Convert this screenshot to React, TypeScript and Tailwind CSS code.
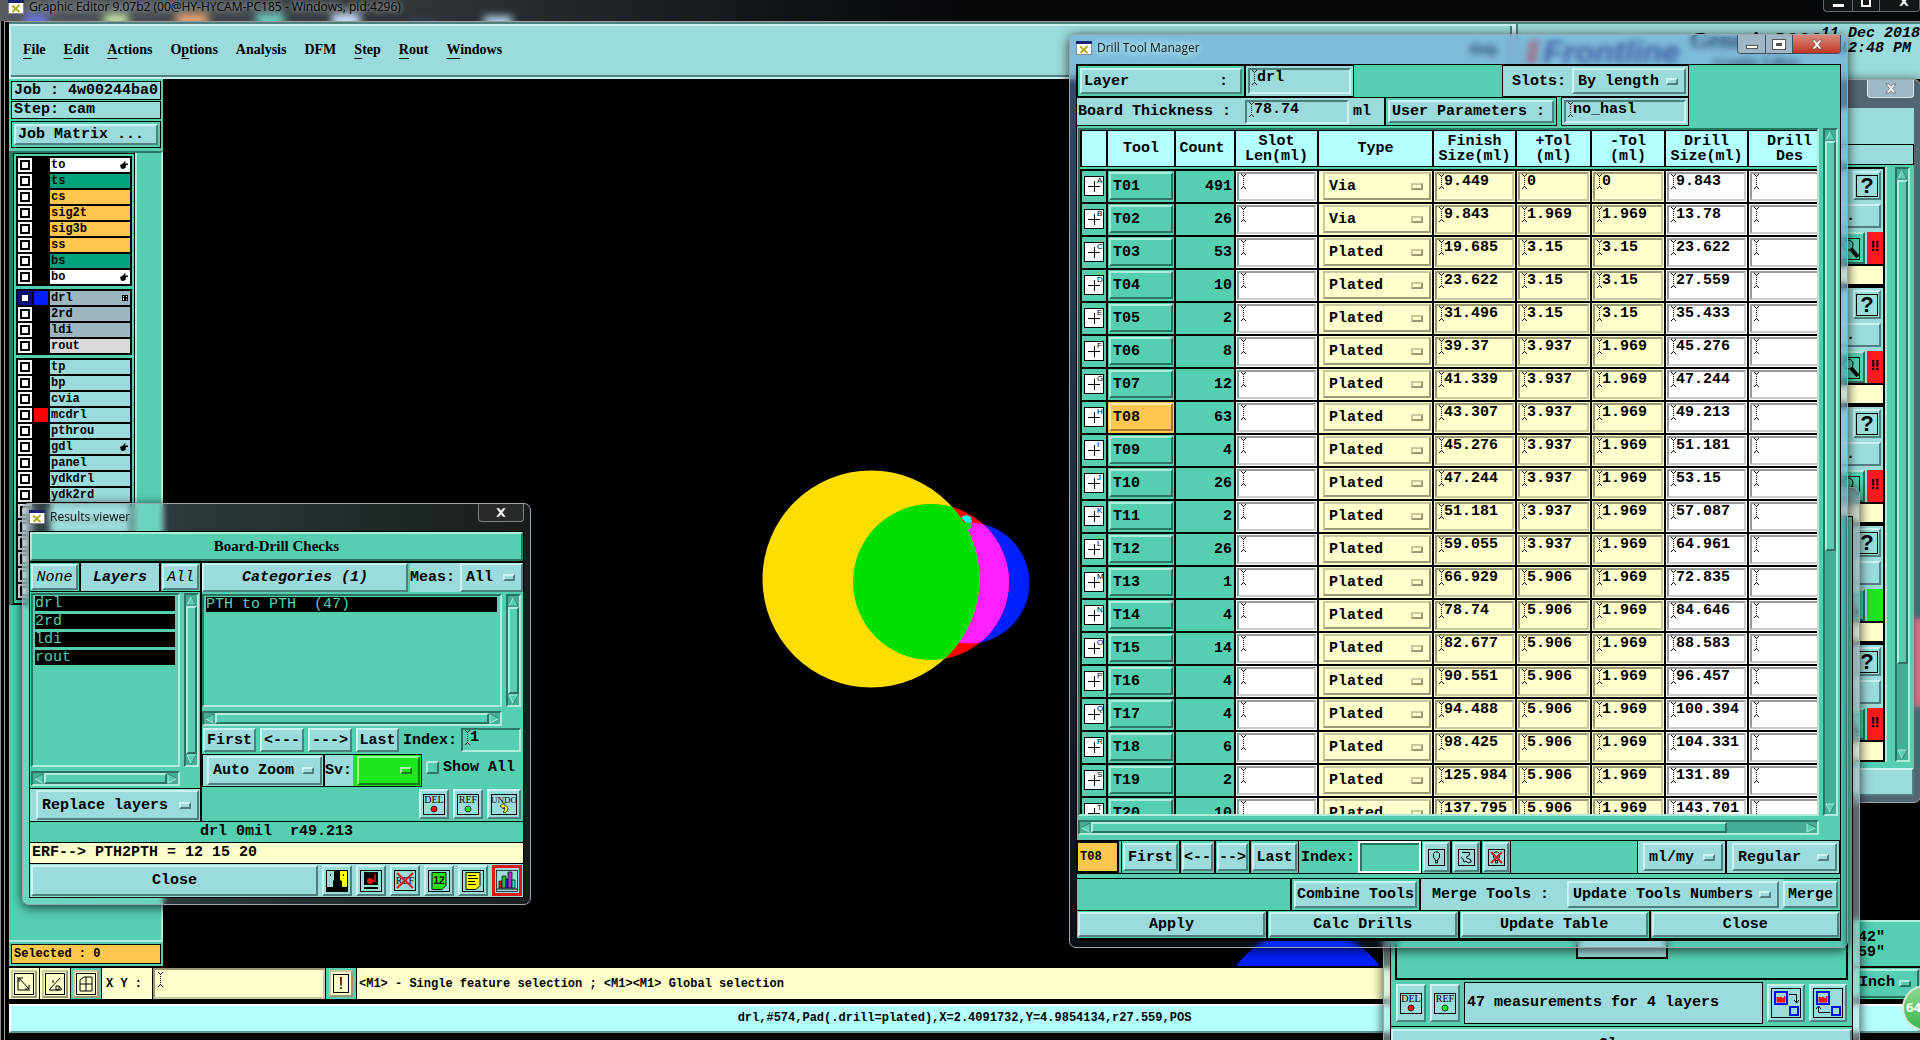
import type { ReactNode } from "react";

const mono = "font-['Liberation_Mono',monospace]";
const raised = "border-2 border-t-[#c9f3f3] border-l-[#c9f3f3] border-r-[#4f8080] border-b-[#4f8080] bg-[#9cdbdb]";
const sunken = "border-2 border-t-[#4f8080] border-l-[#4f8080] border-r-[#c9f3f3] border-b-[#c9f3f3] bg-[#9cdbdb]";
const raisedTeal = "border-2 border-t-[#b0ecdb] border-l-[#b0ecdb] border-r-[#297562] border-b-[#297562] bg-[#55cfb0]";
const sunkenTeal = "border-2 border-t-[#297562] border-l-[#297562] border-r-[#b0ecdb] border-b-[#b0ecdb] bg-[#55cfb0]";
const raisedCream = "border-2 border-t-[#c9c99f] border-l-[#c9c99f] border-r-[#999977] border-b-[#999977] bg-[#ffffcc]";
const sunkenCream = "border-2 border-t-[#999977] border-l-[#999977] border-r-[#c9c99f] border-b-[#c9c99f] bg-[#ffffcc]";
const sunkenWhite = "border-2 border-t-[#999999] border-l-[#999999] border-r-[#cccccc] border-b-[#cccccc] bg-white";

function Beam() {
    return (
        <svg width="5" height="15" className="shrink-0" shapeRendering="crispEdges">
            <path d="M0 0h1v1H0zM4 0h1v1H4zM1 1h1v1H1zM3 1h1v1H3zM0 14h1v1H0zM4 14h1v1H4zM1 13h1v1H1zM3 13h1v1H3z" />
            <path d="M2.5 2V13" stroke="#000" strokeDasharray="1 1" />
        </svg>
    );
}

function Field({ label, value, look, className = "" }: { label: string; value: string; look: string; className?: string }) {
    return (
        <div className={`flex items-start pl-0.5 ${look} ${className}`}>
            <Beam />
            <input aria-label={label} defaultValue={value} className="h-4 w-full min-w-0 bg-transparent p-0 leading-4 outline-none" />
        </div>
    );
}

function Btn({ children, className = "" }: { children: ReactNode; className?: string }) {
    return (
        <button type="button" className={`flex items-center justify-center whitespace-nowrap ${raised} ${className}`}>
            {children}
        </button>
    );
}

function Option({ label, options, look = raised, className = "", knob = raised }: { label: string; options: string[]; look?: string; className?: string; knob?: string }) {
    return (
        <div className={`flex items-center pr-1.5 pl-1 ${look} ${className}`}>
            <select aria-label={label} className="h-full w-full min-w-0 appearance-none bg-transparent p-0 outline-none">
                {options.map((o) => (
                    <option key={o}>{o}</option>
                ))}
            </select>
            <span className={`h-[7px] w-3 shrink-0 ${knob}`}></span>
        </div>
    );
}

function Arrow({ dir }: { dir: "up" | "down" | "left" | "right" }) {
    const turn = { up: 0, right: 90, down: 180, left: 270 }[dir];
    return (
        <button type="button" aria-label={`Scroll ${dir}`} className="block size-[11px] shrink-0">
            <svg viewBox="0 0 11 11" className="size-[11px]">
                <g transform={`rotate(${turn} 5.5 5.5)`}>
                    <path d="M5.5 1 10 10H1z" fill="#55cfb0" stroke="#b0ecdb" />
                    <path d={dir === "up" || dir === "left" ? "M5.5 1 10 10H1" : "M1 10 5.5 1"} fill="none" stroke="#297562" />
                </g>
            </svg>
        </button>
    );
}

function VScroll({ size = 100 }: { size?: number }) {
    return (
        <div className="flex w-[15px] shrink-0 flex-col border-2 border-t-[#297562] border-l-[#297562] border-r-[#b0ecdb] border-b-[#b0ecdb] bg-[#44ad94]">
            <Arrow dir="up" />
            <div className="min-h-0 flex-1">
                <div className={raisedTeal} style={{ height: `${size}%` }}></div>
            </div>
            <Arrow dir="down" />
        </div>
    );
}

function HScroll({ size = 100 }: { size?: number }) {
    return (
        <div className="flex h-[15px] flex-1 border-2 border-t-[#297562] border-l-[#297562] border-r-[#b0ecdb] border-b-[#b0ecdb] bg-[#44ad94]">
            <Arrow dir="left" />
            <div className="min-w-0 flex-1">
                <div className={`h-full ${raisedTeal}`} style={{ width: `${size}%` }}></div>
            </div>
            <Arrow dir="right" />
        </div>
    );
}

function AppIcon() {
    return (
        <svg width="16" height="14" viewBox="0 0 16 14" className="shrink-0">
            <rect x=".5" y=".5" width="15" height="13" fill="#fff" stroke="#888" />
            <rect width="16" height="3" fill="#1a2370" />
            <path d="M4 5.5 11.5 12M11.5 5 4.5 12" stroke="#b4ac1c" strokeWidth="2" />
        </svg>
    );
}

function CloseGlyph() {
    return (
        <svg width="12" height="11" viewBox="0 0 12 11">
            <path d="M1 1h3l2 2.4L8 1h3L7.6 5.5 11 10H8L6 7.6 4 10H1l3.4-4.5z" fill="#fff" stroke="#444" strokeWidth=".6" />
        </svg>
    );
}

function Glass({ title, className, tone, bar = "h-[28px]", controls, children }: { title?: string; className: string; tone: string; bar?: string; controls?: ReactNode; children: ReactNode }) {
    return (
        <section className={`absolute flex flex-col rounded-[7px] border border-[#9aa7ad] px-1.5 pb-1.5 shadow-[0_2px_12px_rgba(0,0,0,0.75)] backdrop-blur-[3px] ${tone} ${className}`}>
            <header className={`flex shrink-0 items-start justify-between ${bar}`}>
                <div className="flex h-[26px] items-center gap-[5px]">
                    {title && (
                        <>
                            <AppIcon />
                            <h2 className="font-['Open_Sans',sans-serif] text-[12px] leading-4 font-normal text-[#0a1418] [text-shadow:0_0_6px_#cfe,0_0_8px_#cfe]">{title}</h2>
                        </>
                    )}
                </div>
                {controls}
            </header>
            <div className="flex min-h-0 flex-1 flex-col">{children}</div>
        </section>
    );
}

/* ---------- main window ---------- */

const menus = [
    ["F", "ile", ""],
    ["E", "dit", ""],
    ["A", "ctions", ""],
    ["p", "tions", "O"],
    ["", "Analysis", ""],
    ["", "DFM", ""],
    ["S", "tep", ""],
    ["R", "out", ""],
    ["W", "indows", ""],
];

type Layer = { name: string; bg: string; mark?: "hand" | "grid"; swatch?: string };
const white = "bg-white";
const green = "bg-[#00a37c]";
const orange = "bg-[#ffc74f]";
const grey = "bg-[#9bb6be]";
const cyan = "bg-[#9cdbdb]";

const layerGroups: Layer[][] = [
    [
        { name: "to", bg: white, mark: "hand" },
        { name: "ts", bg: green },
        { name: "cs", bg: orange },
        { name: "sig2t", bg: orange },
        { name: "sig3b", bg: orange },
        { name: "ss", bg: orange },
        { name: "bs", bg: green },
        { name: "bo", bg: white, mark: "hand" },
    ],
    [
        { name: "drl", bg: grey, mark: "grid", swatch: "bg-[#0020ff]" },
        { name: "2rd", bg: grey },
        { name: "ldi", bg: grey },
        { name: "rout", bg: "bg-[#d9d9d9]" },
    ],
    [
        { name: "tp", bg: cyan },
        { name: "bp", bg: cyan },
        { name: "cvia", bg: cyan },
        { name: "mcdrl", bg: cyan, swatch: "bg-[#ff0000]" },
        { name: "pthrou", bg: cyan },
        { name: "gdl", bg: cyan, mark: "hand" },
        { name: "panel", bg: cyan },
        { name: "ydkdrl", bg: cyan },
        { name: "ydk2rd", bg: cyan },
        ...Array.from({ length: 6 }, () => ({ name: "", bg: cyan })),
    ],
];

function LayerRow({ layer }: { layer: Layer }) {
    const active = layer.name === "drl";
    return (
        <li className="flex h-4 items-center gap-0.5">
            <button type="button" aria-label={`Show ${layer.name}`} className={`flex size-[14px] items-center justify-center ${active ? "bg-[#0c0c8c]" : "bg-white"}`}>
                <span className={`size-[10px] border-2 bg-white ${active ? "border-[#0c0c60]" : "border-black"}`}></span>
            </button>
            <span className={`h-[14px] w-[14px] ${layer.swatch ?? "bg-black"}`}></span>
            <span className={`flex h-[14px] flex-1 items-center justify-between pr-0.5 pl-px text-[12px] leading-[14px] ${layer.bg}`}>
                {layer.name}
                {layer.mark === "hand" && (
                    <svg width="8" height="8" viewBox="0 0 8 8">
                        <path d="M0 4 3 2.5 5 0l.6.4L5 2.5h3V4H6l-.5 3L3 8 1 7.6z" />
                    </svg>
                )}
                {layer.mark === "grid" && (
                    <svg width="6" height="6" viewBox="0 0 6 6" shapeRendering="crispEdges">
                        <path d="M0 0h6v6H0z" />
                        <path d="M1 1h1v1H1zM4 1h1v1H4zM1 4h1v1H1zM4 4h1v1H4zM1 3h1v1H1z" fill="#fff" />
                    </svg>
                )}
            </span>
        </li>
    );
}

function Sidebar() {
    return (
        <aside className="flex w-[154px] shrink-0 flex-col bg-[#55cfb0] text-[15px] leading-[15px]">
            <div className="space-y-px px-0.5 pt-0.5">
                <div className="h-[19px] border border-black bg-[#9cdbdb] px-0.5 leading-[17px] whitespace-nowrap">Job : 4w00244ba0</div>
                <div className="h-[18px] border border-black bg-[#9cdbdb] px-0.5 leading-4">Step: cam</div>
            </div>
            <div className="mx-0.5 mt-0.5 h-[27px] border border-black p-0.5">
                <button type="button" className={`h-full w-full pl-0.5 text-left ${raised}`}>Job Matrix ...</button>
            </div>
            <div className="mt-[3px] flex min-h-0 flex-1 flex-col border-t-2 border-r-2 border-b-2 border-t-[#297562] border-r-[#b0ecdb] border-b-[#b0ecdb]">
                <div className="w-[128px] border-r-2 border-b border-l-4 border-r-[#b0ecdb] border-b-black border-l-[#2f7a66]">
                    <div className="border border-black px-0.5 pt-0.5">
                        {layerGroups.map((group, i) => (
                            <ul key={i} className="mb-[3px] border-y border-black bg-black px-0.5">
                                {group.map((layer, j) => (
                                    <LayerRow key={j} layer={layer} />
                                ))}
                            </ul>
                        ))}
                    </div>
                </div>
            </div>
            <div className="m-0.5 mt-0.5 h-5 border border-black bg-[#ffc74f] px-0.5 text-[12px] leading-[18px]">Selected : 0</div>
        </aside>
    );
}

function Canvas() {
    return (
        <svg className="absolute inset-0 h-full w-full">
            <defs>
                <clipPath id="yellowClip">
                    <circle cx="708" cy="500" r="108.5" />
                </clipPath>
                <clipPath id="redClip">
                    <circle cx="768" cy="503" r="78" />
                </clipPath>
            </defs>
            <circle cx="806" cy="504" r="60.5" fill="#0020ff" />
            <circle cx="768" cy="503" r="78" fill="#ff0000" />
            <circle cx="806" cy="504" r="60.5" fill="#ff20ff" clipPath="url(#redClip)" />
            <circle cx="708" cy="500" r="108.5" fill="#ffdd00" />
            <circle cx="768" cy="503" r="78" fill="#00e000" clipPath="url(#yellowClip)" />
            <circle cx="804" cy="447" r="4" fill="#00e000" />
            <path d="M798 438l5-2 5 2 1 5-3 1-4-1z" fill="#00ffff" />
            <circle cx="1145" cy="938" r="88" fill="#0020ff" />
            <rect x="1751" y="540" width="10" height="88" fill="#ff1a1a" />
        </svg>
    );
}

function SmallTool({ label, framed, children }: { label: string; framed?: boolean; children: ReactNode }) {
    return (
        <div className={`flex h-full items-center justify-center px-0.5 ${framed ? "bg-[#55cfb0]" : "bg-[#ffffcc]"}`}>
            <button type="button" aria-label={label} className={`p-px ${raisedCream}`}>
                <svg width="20" height="22" viewBox="0 0 20 22" fill="none" stroke="#000" className="block">
                    <rect x=".5" y=".5" width="19" height="21" />
                    {children}
                </svg>
            </button>
        </div>
    );
}

function MainWindow() {
    return (
        <main className="flex h-screen flex-col overflow-hidden bg-black">
            <header className="relative flex h-[21px] shrink-0 items-start justify-between overflow-hidden bg-linear-to-r from-[#555b5e] via-[#05080b] to-[#05080b]">
                <div className="absolute inset-x-0 top-3 flex gap-[48px] pl-6 blur-[4px]">
                    <span className="h-4 w-6 bg-[#6670d0]"></span>
                    <span className="ml-2 h-4 w-6 bg-[#b9d99c]"></span>
                    <span className="h-4 w-8 bg-[#e0a070]"></span>
                    <span className="h-4 w-7 bg-[#6cc8b8]"></span>
                    <span className="h-4 w-7 bg-[#c8dcf8]"></span>
                    <span className="mt-2 h-4 w-7 bg-[#38485c]"></span>
                    <span className="mt-1 h-4 w-7 bg-[#b8d8f0]"></span>
                </div>
                <div className="relative flex h-[14px] items-center gap-[5px] pl-2">
                    <AppIcon />
                    <h1 className="font-['Open_Sans',sans-serif] text-[12px] leading-4 font-normal text-black [text-shadow:0_0_4px_#8b9498,0_0_6px_#8b9498,0_0_8px_#8b9498]">
                        Graphic Editor 9.07b2 (00@HY-HYCAM-PC185 - Windows, pid:4296)
                    </h1>
                </div>
                <div className="relative flex h-3 rounded-b border border-t-0 border-[#62686c] bg-[#111619] text-white">
                    <button type="button" aria-label="Minimize" className="flex w-[29px] items-center justify-center border-r border-[#62686c]">
                        <span className="h-[3px] w-[11px] bg-white"></span>
                    </button>
                    <button type="button" aria-label="Maximize" className="flex w-[27px] items-start justify-center border-r border-[#62686c]">
                        <span className="h-[7px] w-[10px] border-2 border-t-0 border-white"></span>
                    </button>
                    <button type="button" aria-label="Close" className="-mt-1 flex w-[39px] justify-center pl-2">
                        <CloseGlyph />
                    </button>
                </div>
            </header>

            <div className="flex min-h-0 flex-1 flex-col border-l border-[#8c8c8c] pl-[3px]">
                <div className="flex min-h-0 flex-1 flex-col border-t border-l border-[#9a9a9a] pl-1">
                    <div className="flex h-[57px] shrink-0 border-t-2 border-[#4f8080] bg-[#c9f3f3]">
                        <nav className="m-0.5 flex flex-1 items-center gap-[18px] border-r-2 border-b-2 border-[#4f8080] bg-[#9cdbdb] pb-0.5 pl-3 font-['Liberation_Serif',serif] text-[14px] leading-5 font-bold">
                            {menus.map(([key, rest, before]) => (
                                <a key={rest} href="#" className="whitespace-nowrap">
                                    {before}
                                    <span className="underline underline-offset-4">{key}</span>
                                    {rest}
                                </a>
                            ))}
                            <a href="#" className="mr-3 ml-auto">Help</a>
                        </nav>
                        <div className="ml-0.5 flex w-[404px] justify-between overflow-hidden border-l-2 border-[#4f8080] bg-[#9cdbdb]">
                            <div className="flex items-center gap-px pl-2 font-['Liberation_Sans',sans-serif] text-[32px] leading-8 font-bold text-[#1c2170] italic">
                                <svg width="16" height="24" viewBox="0 0 16 24">
                                    <path d="M3 0h4L5 24H0zM9 0h4l-3 24H6z" fill="#d8413c" />
                                </svg>
                                Frontline
                            </div>
                            <div className="pt-0.5 text-center font-['Liberation_Serif',serif] font-bold">
                                <div className="text-[24px] leading-7 whitespace-nowrap">Genesis 2000</div>
                                <div className="text-[13px] leading-4">Graphic Editor</div>
                            </div>
                            <time className="-ml-3 pt-0.5 text-right text-[15px] leading-[15px] whitespace-nowrap italic">
                                11 Dec 2018
                                <br />
                                12:48 PM&nbsp;
                            </time>
                        </div>
                    </div>

                    <div className="flex min-h-0 flex-1">
                        <Sidebar />
                        <div className="relative flex-1 overflow-hidden bg-black">
                            <Canvas />
                            <div className="absolute right-0 bottom-0 w-[300px] border-t-2 border-[#b0ecdb] bg-[#55cfb0] pt-2 pr-[35px] pb-1.5 text-right text-[15px] leading-[15px]">
                                42"
                                <br />
                                59"
                            </div>
                        </div>
                    </div>

                    <div className="flex h-[35px] shrink-0 gap-px border-y-2 border-black bg-black">
                        <SmallTool label="Measure">
                            <path d="M4 4v13h12M5 5l10 11M5 5v4M5 5h4M15 16v-4M15 16h-4" />
                        </SmallTool>
                        <SmallTool label="Angle">
                            <path d="M4 17 15 5M8 7v3M4 17h12M11 13v4h3v-4zM14 13l3 4" />
                        </SmallTool>
                        <SmallTool label="Grid" framed>
                            <path d="M4 7 8 4h8v14H4zM4 11h12M10 4v14" />
                        </SmallTool>
                        <label htmlFor="xy" className="flex w-[50px] items-center bg-[#ffffcc] pl-1 text-[12px]">X Y :</label>
                        <div className={`flex w-[172px] items-start pt-0.5 pl-[3px] ${sunkenCream}`}>
                            <Beam />
                            <input id="xy" className="w-full min-w-0 bg-transparent text-[12px] outline-none" />
                        </div>
                        <div className="flex items-center bg-[#55cfb0] px-[3px]">
                            <button type="button" className={`p-0.5 ${raisedCream}`}>
                                <span className="flex h-[19px] w-4 items-center justify-center border border-black text-[18px] leading-4 font-normal">!</span>
                            </button>
                        </div>
                        <p className="flex flex-1 items-center overflow-hidden bg-[#ffffcc] pl-0.5 text-[12px] whitespace-nowrap">
                            {"<M1> - Single feature selection ; <M1><M1> Global selection"}
                        </p>
                        <div className="flex w-[200px] justify-end bg-[#55cfb0] p-px text-[15px]">
                            <Option label="Units" options={["Inch"]} look={raisedTeal} knob={raisedTeal} className="w-[66px]" />
                        </div>
                    </div>

                    <div className="mt-[3px] mb-[7px] h-[29px] shrink-0 border-2 border-t-white border-r-[#5a9a9a] border-b-[#5a9a9a] border-l-white bg-[#b4ffff] text-center text-[12px] leading-[25px]">
                        drl,#574,Pad(.drill=plated),X=2.4091732,Y=4.9854134,r27.559,POS
                    </div>
                </div>
            </div>
        </main>
    );
}

/* ---------- windows behind the drill manager ---------- */

const checkStates = ["red", "red", "red", "green", "red"];

function ChecklistWindow() {
    return (
        <Glass
            className="top-[79px] left-[1500px] h-[724px] w-[421px]"
            tone="bg-[#a5cbe8]/50"
            controls={
                <button type="button" aria-label="Close" className="flex h-[18px] w-[47px] items-center justify-center rounded-b border border-t-0 border-[#dfe9ee] bg-[#9fb8c6]">
                    <CloseGlyph />
                </button>
            }
        >
            <div className="flex flex-1 flex-col bg-[#55cfb0]">
                <div className="h-9 bg-[#9cdbdb]"></div>
                <div className="h-[21px] border border-black bg-[#9cdbdb]"></div>
                <div className="mt-0.5 flex min-h-0 flex-1 gap-2 pr-1">
                    <div className="flex-1 border-r-2 border-[#b0ecdb]">
                        {checkStates.map((state, i) => (
                            <div key={i} className="flex h-[119px] flex-col border-2 border-l-0 border-black bg-[#9cdbdb]">
                                <div className="flex h-[31px] justify-end pt-0.5 pr-0.5">
                                    <button type="button" aria-label="Help" className={`w-7 p-px ${raised}`}>
                                        <span className="flex h-[22px] items-center justify-center border border-black font-['Liberation_Sans',sans-serif] text-[22px] leading-5">?</span>
                                    </button>
                                </div>
                                <div className={`mt-1 mr-0.5 h-[24px] pr-6 text-right text-[15px] ${raised}`}>.</div>
                                <div className="mt-1 flex h-[34px] justify-end border-b-2 border-black">
                                    <button type="button" aria-label="Zoom to result" className={`mr-0.5 h-8 w-[30px] ${raisedTeal}`}>
                                        <svg width="24" height="24" viewBox="0 0 24 24" fill="none" stroke="#000" className="block">
                                            <rect x=".5" y="2.5" width="22" height="21" />
                                            <circle cx="11" cy="9" r="5" />
                                            <path d="m14 13 7 8" strokeWidth="4" />
                                        </svg>
                                    </button>
                                    <span className={`flex w-4 items-center justify-center text-[15px] ${state === "red" ? "bg-[#ff1a1a]" : "bg-[#1ae81a]"}`}>{state === "red" ? "‼" : ""}</span>
                                </div>
                                <div className="flex-1 bg-[#ffffcc]"></div>
                            </div>
                        ))}
                    </div>
                    <VScroll size={85} />
                </div>
                <div className={`mt-1.5 h-7 ${raised}`}></div>
            </div>
        </Glass>
    );
}

function TaggedIcon({ text, dot, children }: { text: string; dot?: string; children?: ReactNode }) {
    return (
        <svg width="22" height="21" viewBox="0 0 22 21" className="block">
            <rect x=".5" y=".5" width="21" height="20" fill="none" stroke="#000" />
            <text x="11" y="9" textAnchor="middle" className="font-['Liberation_Serif',serif] text-[10px] font-normal">{text}</text>
            {dot && <circle cx="11" cy="15" r="3" fill={dot} stroke="#000" strokeWidth=".7" />}
            {children}
        </svg>
    );
}

function MeasurementsWindow() {
    return (
        <Glass className="top-[487px] left-[1383px] h-[582px] w-[477px]" tone="bg-linear-to-b from-[#9fb4be]/60 to-[#cfe4ea]/50">
            <div className="flex flex-1 flex-col border border-black bg-[#55cfb0]">
                <div className="mx-1 flex flex-1 items-end justify-center border-2 border-t-0 border-black pb-[19px]">
                    <div className="h-20 w-[92px] border-2 border-black bg-[#9cdbdb]"></div>
                </div>
                <div className="mt-0.5 flex h-[42px] gap-1 px-[5px]">
                    <Btn className="my-0.5 w-[30px]">
                        <TaggedIcon text="DEL" dot="#ff1010" />
                    </Btn>
                    <Btn className="my-0.5 w-[30px]">
                        <TaggedIcon text="REF" dot="#1ae81a" />
                    </Btn>
                    <p className="flex flex-1 items-center border border-black bg-[#9cdbdb] pl-0.5 text-[15px]">47 measurements for 4 layers</p>
                    <Btn className="my-0.5 w-[38px]">
                        <svg width="30" height="30" viewBox="0 0 30 30" fill="none" stroke="#000">
                            <rect x=".5" y=".5" width="29" height="29" />
                            <rect x="4" y="4" width="12" height="12" stroke="#0010f0" strokeWidth="2" />
                            <path d="M6 14V9l2 1 2-1 2 2 2-3v6z" fill="#f01010" stroke="#f01010" />
                            <rect x="19" y="19" width="8" height="8" stroke="#0010f0" strokeWidth="2" />
                            <path d="M18 6.5h7.500v8M23 12l2.500 3 2.500-3" />
                        </svg>
                    </Btn>
                    <Btn className="my-0.5 w-[38px]">
                        <svg width="30" height="30" viewBox="0 0 30 30" fill="none" stroke="#000">
                            <rect x=".5" y=".5" width="29" height="29" />
                            <rect x="4" y="4" width="12" height="12" stroke="#0010f0" strokeWidth="2" />
                            <path d="M6 14V9l2 1 2-1 2 2 2-3v6z" fill="#f01010" stroke="#f01010" />
                            <rect x="19" y="19" width="8" height="8" stroke="#0010f0" strokeWidth="2" />
                            <path d="M17 24.500H5.500V19M3 21l2.500-3L8 21" />
                        </svg>
                    </Btn>
                </div>
                <div className="mt-0.5 border-t border-black pt-0.5">
                    <Btn className="h-8 w-full text-[15px]">Close</Btn>
                </div>
            </div>
        </Glass>
    );
}

/* ---------- drill tool manager ---------- */

const tools = [
    ["T01", "491", "Via", "9.449", "0", "0", "9.843"],
    ["T02", "26", "Via", "9.843", "1.969", "1.969", "13.78"],
    ["T03", "53", "Plated", "19.685", "3.15", "3.15", "23.622"],
    ["T04", "10", "Plated", "23.622", "3.15", "3.15", "27.559"],
    ["T05", "2", "Plated", "31.496", "3.15", "3.15", "35.433"],
    ["T06", "8", "Plated", "39.37", "3.937", "1.969", "45.276"],
    ["T07", "12", "Plated", "41.339", "3.937", "1.969", "47.244"],
    ["T08", "63", "Plated", "43.307", "3.937", "1.969", "49.213"],
    ["T09", "4", "Plated", "45.276", "3.937", "1.969", "51.181"],
    ["T10", "26", "Plated", "47.244", "3.937", "1.969", "53.15"],
    ["T11", "2", "Plated", "51.181", "3.937", "1.969", "57.087"],
    ["T12", "26", "Plated", "59.055", "3.937", "1.969", "64.961"],
    ["T13", "1", "Plated", "66.929", "5.906", "1.969", "72.835"],
    ["T14", "4", "Plated", "78.74", "5.906", "1.969", "84.646"],
    ["T15", "14", "Plated", "82.677", "5.906", "1.969", "88.583"],
    ["T16", "4", "Plated", "90.551", "5.906", "1.969", "96.457"],
    ["T17", "4", "Plated", "94.488", "5.906", "1.969", "100.394"],
    ["T18", "6", "Plated", "98.425", "5.906", "1.969", "104.331"],
    ["T19", "2", "Plated", "125.984", "5.906", "1.969", "131.89"],
    ["T20", "10", "Plated", "137.795", "5.906", "1.969", "143.701"],
];

const columns = [
    ["", "w-[26px]"],
    ["Tool", "w-[68px]"],
    ["Count", "w-[60px] pr-1.5"],
    ["Slot\nLen(ml)", "w-[83px]"],
    ["Type", "w-[115px]"],
    ["Finish\nSize(ml)", "w-[83px]"],
    ["+Tol\n(ml)", "w-[75px]"],
    ["-Tol\n(ml)", "w-[74px]"],
    ["Drill\nSize(ml)", "w-[83px]"],
    ["Drill\nDes", "w-[83px]"],
];

function ToolTable() {
    return (
        <table className="w-[751px] table-fixed border-collapse">
            <thead>
                <tr className="h-[36px] bg-[#b4ffff]">
                    {columns.map(([name, width], i) => (
                        <th key={i} className={`border-2 border-t border-b border-black p-0 text-center leading-[15px] whitespace-pre ${width}`}>
                            {name}
                        </th>
                    ))}
                </tr>
                <tr aria-hidden="true" className="h-[3px]">
                    <td colSpan={10} className="p-0"></td>
                </tr>
            </thead>
            <tbody>
                {tools.map(([tool, count, type, finish, plus, minus, drill], i) => (
                    <tr key={tool} className="h-[33px]">
                        <td className="border-2 border-black p-0">
                            <svg width="20" height="20" viewBox="0 0 20 20" className="mx-auto block">
                                <rect x=".5" y=".5" width="19" height="19" fill="#fff" stroke="#000" />
                                <path d="M4 10.500h12M10.500 5v11" stroke="#000" />
                                <text x="13" y="7" className="font-['Liberation_Sans',sans-serif] text-[8px] font-normal">
                                    {String.fromCharCode(65 + i)}
                                </text>
                            </svg>
                        </td>
                        <td className={`border-2 border-black p-px ${tool === "T08" ? "bg-[#ffc74f]" : ""}`}>
                            <button type="button" className={`block h-[28px] w-full pl-0.5 text-left ${tool === "T08" ? "border-2 border-t-[#ffe6b0] border-r-[#a87a28] border-b-[#a87a28] border-l-[#ffe6b0]" : raisedTeal}`}>
                                {tool}
                            </button>
                        </td>
                        <td className="border-2 border-black p-0 pr-0.5 text-right">{count}</td>
                        <td className="border-2 border-black bg-white p-px">
                            <Field label={`${tool} slot length`} value="" look={sunkenWhite} className="h-[29px]" />
                        </td>
                        <td className="border-2 border-black bg-[#ffffcc] p-px pl-1">
                            <Option label={`${tool} type`} options={[type]} look={raisedCream} knob={raisedCream} className="h-[28px]" />
                        </td>
                        {[finish, plus, minus].map((value, j) => (
                            <td key={j} className="border-2 border-black bg-[#ffffcc] p-px">
                                <Field label={`${tool} ${["finish size", "plus tolerance", "minus tolerance"][j]}`} value={value} look={sunkenCream} className="h-[29px]" />
                            </td>
                        ))}
                        {[drill, ""].map((value, j) => (
                            <td key={j} className="border-2 border-black bg-white p-px">
                                <Field label={`${tool} ${j ? "drill designator" : "drill size"}`} value={value} look={sunkenWhite} className="h-[29px]" />
                            </td>
                        ))}
                    </tr>
                ))}
            </tbody>
        </table>
    );
}

function Boxed({ children, className = "" }: { children: ReactNode; className?: string }) {
    return <div className={`flex border-black ${className}`}>{children}</div>;
}

function DrillManager() {
    return (
        <Glass
            title="Drill Tool Manager"
            className="top-[34px] left-[1069px] h-[914px] w-[779px]"
            bar="h-[29px]"
            tone="bg-linear-to-b from-[#5f9bd8]/50 to-[#5f9bd8]/10"
            controls={
                <div className="flex h-[19px] overflow-hidden rounded-b border border-t-0 border-[#405060]">
                    <button type="button" aria-label="Minimize" className="flex w-7 items-end justify-center border-r border-[#405060] bg-[#9fb6c4] pb-1">
                        <span className="h-[4px] w-3 border border-[#555] bg-white"></span>
                    </button>
                    <button type="button" aria-label="Maximize" className="flex w-[27px] items-center justify-center border-r border-[#405060] bg-[#9fb6c4]">
                        <span className="h-[9px] w-3 border-[3px] border-white bg-[#555] outline outline-[#555]"></span>
                    </button>
                    <button type="button" aria-label="Close" className="flex w-[47px] items-center justify-center bg-linear-to-b from-[#d98a7c] to-[#c03220]">
                        <CloseGlyph />
                    </button>
                </div>
            }
        >
            <div className="flex min-h-0 flex-1 flex-col border border-black bg-[#55cfb0] text-[15px] leading-[15px]">
                <div className="flex h-8 shrink-0">
                    <Boxed className="w-[168px] border p-0.5">
                        <button type="button" className={`flex flex-1 items-center justify-between px-3 pl-0.5 ${raised}`}>
                            <span>Layer</span>
                            <span>:</span>
                        </button>
                    </Boxed>
                    <div className="flex w-[109px] border border-black bg-[#9cdbdb] p-0.5">
                        <Field label="Layer" value="drl" look={sunken} className="flex-1" />
                    </div>
                    <div className="ml-auto flex w-[187px] items-center border border-black bg-[#9cdbdb] py-0.5 pr-0.5 pl-[9px]">
                        <span className="w-[60px]">Slots:</span>
                        <Option label="Slots" options={["By length"]} className="h-full flex-1" />
                    </div>
                    <div className="w-[151px]"></div>
                </div>
                <div className="flex h-[29px] shrink-0">
                    <div className="flex w-[307px] items-center border-t border-b border-black bg-[#9cdbdb] pl-px">
                        <span className="w-[167px]">Board Thickness :</span>
                        <Field label="Board Thickness" value="78.74" look={sunken} className="h-6 w-[104px]" />
                        <span className="pl-1">ml</span>
                    </div>
                    <div className="flex w-[173px] border border-l-2 border-black p-0.5">
                        <button type="button" className={`flex-1 pl-0.5 text-left whitespace-nowrap ${raised}`}>User Parameters :</button>
                    </div>
                    <div className="ml-auto flex w-[128px] border border-black bg-[#9cdbdb] p-0.5">
                        <Field label="User Parameters" value="no_hasl" look={sunken} className="flex-1" />
                    </div>
                    <div className="w-[151px]"></div>
                </div>

                <div className="mt-0.5 flex min-h-0 flex-1 gap-1 pr-0.5 pl-px">
                    <div className="min-w-0 flex-1 overflow-hidden border-2 border-t-[#297562] border-r-[#b0ecdb] border-b-[#b0ecdb] border-l-[#297562]">
                        <ToolTable />
                    </div>
                    <VScroll size={62} />
                </div>
                <div className="mt-1 mr-[21px] ml-px flex h-[15px] shrink-0">
                    <HScroll size={89} />
                </div>

                <div className="mt-[5px] flex h-[34px] shrink-0 border-y border-black">
                    <div className="flex w-[42px] items-center border-2 border-l border-black bg-[#ffc74f] pl-0.5 text-[12px]">T08</div>
                    <Boxed className="ml-0.5 border-x px-px py-0.5">
                        <Btn className="w-[55px]">First</Btn>
                    </Boxed>
                    <Boxed className="border-x px-px py-0.5">
                        <Btn className="w-[31px]">{"<--"}</Btn>
                    </Boxed>
                    <Boxed className="border-x px-px py-0.5">
                        <Btn className="w-[31px]">{"-->"}</Btn>
                    </Boxed>
                    <Boxed className="border-x px-px py-0.5">
                        <Btn className="w-[45px]">Last</Btn>
                    </Boxed>
                    <label htmlFor="toolIndex" className="flex w-[59px] items-center pl-0.5">Index:</label>
                    <input id="toolIndex" className="w-[63px] border-2 border-white bg-[#55cfb0] px-1 shadow-[inset_2px_2px_0_#297562] outline-none" />
                    {["light", "curve", "off"].map((kind) => (
                        <Boxed key={kind} className="border-x p-px">
                            <button type="button" aria-label={kind} className={`w-[26px] ${raised}`}>
                                <svg width="17" height="17" viewBox="0 0 17 17" fill="none" stroke="#000" className="mx-auto block">
                                    <rect x=".5" y=".5" width="16" height="16" />
                                    {kind === "curve" ? (
                                        <path d="M4 3.500h7.500V6L8 8.500l5 2.500v2M3 8l2 2 1 3 2-1 2 2 3-1" />
                                    ) : (
                                        <path d="M7.500 11.500 5.500 8V4.500L7 3h3l1.500 1.500V8l-2 3.500zM7.500 11v3h2v-3" />
                                    )}
                                    {kind === "off" && <path d="M3 3l11 11M14 3 3 14" stroke="#e01818" strokeWidth="2" />}
                                </svg>
                            </button>
                        </Boxed>
                    ))}
                    <div className="ml-auto flex w-[89px] border-x border-black bg-[#9cdbdb] py-0.5 pr-0.5 pl-[5px]">
                        <Option label="Units" options={["ml/my"]} className="flex-1" />
                    </div>
                    <div className="flex w-[114px] border-x border-black bg-[#9cdbdb] py-0.5 pr-0.5 pl-[5px]">
                        <Option label="Mode" options={["Regular"]} className="flex-1" />
                    </div>
                </div>

                <div className="mt-1 flex h-[33px] shrink-0 border-y border-black">
                    <div className="flex-1"></div>
                    <div className="flex w-[131px] border-x-2 border-black p-0.5">
                        <Btn className="flex-1">Combine Tools</Btn>
                    </div>
                    <div className="flex w-[362px] items-center bg-[#9cdbdb] py-0.5 pr-1 pl-[11px]">
                        <span className="w-[135px] whitespace-pre">Merge Tools :</span>
                        <Option label="Merge Tools" options={["Update Tools Numbers"]} className="h-full flex-1" />
                    </div>
                    <div className="flex w-[57px] py-0.5 pr-0.5">
                        <Btn className="flex-1">Merge</Btn>
                    </div>
                </div>
                <div className="grid h-[29px] shrink-0 grid-cols-4 gap-0.5 border-b-2 border-black bg-black">
                    {["Apply", "Calc Drills", "Update Table", "Close"].map((name) => (
                        <div key={name} className="flex bg-[#55cfb0] p-px">
                            <Btn className="flex-1">{name}</Btn>
                        </div>
                    ))}
                </div>
            </div>
        </Glass>
    );
}

/* ---------- results viewer ---------- */

function ResultsViewer() {
    return (
        <Glass
            title="Results viewer"
            className="top-[503px] left-[22px] h-[402px] w-[509px]"
            bar="h-[27px]"
            tone="bg-linear-to-r from-[#a8e8f0]/30 to-[#a8c0c8]/15"
            controls={
                <button type="button" aria-label="Close" className="flex h-[18px] w-[46px] items-center justify-center rounded-b border border-t-0 border-[#7f8486] bg-[#25292b]">
                    <CloseGlyph />
                </button>
            }
        >
            <div className="flex min-h-0 flex-1 flex-col gap-px border border-black bg-black text-[15px] leading-[15px]">
                <div className={`flex h-[29px] items-center justify-center font-['Liberation_Serif',serif] ${raisedTeal}`}>Board-Drill Checks</div>
                <div className="flex min-h-0 flex-1 gap-0.5 pt-px">
                    <div className="flex w-[170px] flex-col gap-px">
                        <div className="flex h-[28px] gap-0.5">
                            <div className="flex bg-[#55cfb0] p-px">
                                <Btn className="w-[47px] font-normal italic">None</Btn>
                            </div>
                            <div className="flex flex-1 items-center justify-center bg-[#9cdbdb] italic">Layers</div>
                            <div className="flex bg-[#55cfb0] p-px">
                                <Btn className="w-[37px] font-normal italic">All</Btn>
                            </div>
                        </div>
                        <div className="flex min-h-0 flex-1 flex-col gap-1 bg-[#55cfb0] p-px pb-0.5">
                            <div className="flex flex-1 gap-1">
                                <ul className={`flex-1 space-y-[3px] p-px pl-0.5 ${sunkenTeal}`}>
                                    {["drl", "2rd", "ldi", "rout"].map((name) => (
                                        <li key={name} className="mr-0.5 h-[15px] bg-black font-normal text-[#55cfb0]">{name}</li>
                                    ))}
                                </ul>
                                <VScroll />
                            </div>
                            <div className="mr-[19px] flex h-[15px]">
                                <HScroll />
                            </div>
                        </div>
                        <div className="flex h-[32px] bg-[#9cdbdb] p-px pl-1.5">
                            <Option label="Layer display" options={["Replace layers"]} className="flex-1" />
                        </div>
                    </div>

                    <div className="flex min-w-0 flex-1 flex-col bg-[#55cfb0]">
                        <div className="flex h-[29px] gap-0.5">
                            <Btn className="w-[206px] italic">Categories (1)</Btn>
                            <div className="flex flex-1 items-center bg-[#9cdbdb]">
                                <span className="w-[50px]">Meas:</span>
                                <Option label="Measurements" options={["All"]} className="h-full flex-1" />
                            </div>
                        </div>
                        <div className="mt-0.5 flex min-h-0 flex-1 gap-1 pr-0.5">
                            <ul className={`flex-1 p-px pl-0.5 ${sunkenTeal}`}>
                                <li className="mr-0.5 h-[15px] bg-black font-normal whitespace-pre text-[#55cfb0]">PTH to PTH  (47)</li>
                            </ul>
                            <VScroll />
                        </div>
                        <div className="mt-1 mr-[21px] flex h-[15px]">
                            <HScroll />
                        </div>
                        <div className="mt-0.5 flex h-6 gap-1 pr-0.5 pl-px">
                            <Btn className="w-[53px]">First</Btn>
                            <Btn className="w-[44px]">{"<---"}</Btn>
                            <Btn className="w-[44px]">{"--->"}</Btn>
                            <Btn className="w-[43px]">Last</Btn>
                            <span className="flex w-[54px] items-center">Index:</span>
                            <Field label="Index" value="1" look={sunkenTeal} className="flex-1" />
                        </div>
                        <div className="mt-0.5 flex h-[33px]">
                            <div className="flex w-[123px] border border-r-2 border-black bg-[#9cdbdb] p-px pl-1">
                                <Option label="Zoom mode" options={["Auto Zoom"]} className="flex-1" />
                            </div>
                            <div className="flex w-[97px] items-center border border-l-0 border-black bg-[#9cdbdb]">
                                <span className="w-7 shrink-0">Sv:</span>
                                <div className="flex h-full flex-1 bg-[#1ae81a] p-px pl-1">
                                    <Option
                                        label="Severity"
                                        options={[""]}
                                        look="border-2 border-t-[#a0f8a0] border-l-[#a0f8a0] border-r-[#108010] border-b-[#108010] bg-[#1ae81a]"
                                        knob="border-2 border-t-[#a0f8a0] border-l-[#a0f8a0] border-r-[#108010] border-b-[#108010]"
                                        className="flex-1"
                                    />
                                </div>
                            </div>
                            <label className="flex items-center gap-1 pb-1.5 pl-1">
                                <input type="checkbox" className={`size-[13px] appearance-none ${raisedTeal}`} />
                                Show All
                            </label>
                        </div>
                        <div className="flex h-[34px] justify-end gap-1 py-[2px] pr-0.5">
                            <Btn className="w-[30px]">
                                <TaggedIcon text="DEL" dot="#ff1010" />
                            </Btn>
                            <Btn className="w-[30px]">
                                <TaggedIcon text="REF" dot="#1ae81a" />
                            </Btn>
                            <Btn className="w-[34px]">
                                <svg width="26" height="21" viewBox="0 0 26 21" className="block">
                                    <rect x=".5" y=".5" width="25" height="20" fill="none" stroke="#000" />
                                    <text x="13" y="9" textAnchor="middle" className="font-['Liberation_Serif',serif] text-[9px] font-normal">UNDO</text>
                                    <path d="M9 12l4-3v2c5 0 5 7 0 8l-1-1c2-1 2-4 1-5v2z" fill="#ff0" stroke="#000" strokeWidth=".7" />
                                </svg>
                            </Btn>
                        </div>
                    </div>
                </div>
                <p className="h-5 bg-[#55cfb0] text-center leading-5 whitespace-pre">drl 0mil  r49.213</p>
                <p className="h-5 bg-[#ffffcc] pl-0.5 leading-5">{"ERF--> PTH2PTH = 12 15 20"}</p>
                <div className="flex h-[33px] gap-1 bg-[#9cdbdb] p-px">
                    <Btn className="flex-1">Close</Btn>
                    <Btn className="w-[30px]">
                        <svg width="22" height="22" viewBox="0 0 22 22">
                            <rect x=".5" y=".5" width="21" height="21" fill="#9cdbdb" stroke="#000" />
                            <path d="M13 1h8v15h-8z" fill="#ff0" />
                            <path d="M8 1h6v9l2 1v6h5v4H1v-4h6v-6l1-1zM4 4h1v2H4zM17 4h1v2h-1z" />
                        </svg>
                    </Btn>
                    <Btn className="w-[30px]">
                        <svg width="22" height="22" viewBox="0 0 22 22">
                            <rect x=".5" y=".5" width="21" height="21" fill="#9cdbdb" stroke="#000" />
                            <path d="M4 2h14v13H4zM4 17h14v2H4z" />
                            <circle cx="10" cy="11" r="3" fill="#f01010" />
                            <path d="M15 4v8M10 11h5" stroke="#f01010" strokeWidth="1.500" />
                        </svg>
                    </Btn>
                    <Btn className="w-[30px]">
                        <TaggedIcon text="">
                            <text x="11" y="14" textAnchor="middle" className="font-['Liberation_Serif',serif] text-[10px] font-normal">REF</text>
                            <path d="M3 3l16 15M19 3 3 18" stroke="#e01818" strokeWidth="2" />
                        </TaggedIcon>
                    </Btn>
                    <Btn className="w-[30px]">
                        <svg width="22" height="22" viewBox="0 0 22 22">
                            <rect x=".5" y=".5" width="21" height="21" fill="#9cdbdb" stroke="#000" />
                            <path d="M4 2.500h14v13l-4 4H4z" fill="#1ae81a" stroke="#000" />
                            <text x="11" y="14" textAnchor="middle" className="font-['Liberation_Sans',sans-serif] text-[10px] font-bold">12</text>
                        </svg>
                    </Btn>
                    <Btn className="w-[30px]">
                        <svg width="22" height="22" viewBox="0 0 22 22">
                            <rect x=".5" y=".5" width="21" height="21" fill="#9cdbdb" stroke="#000" />
                            <path d="M4 2.500h14v13l-4 4H4z" fill="#ff0" stroke="#000" />
                            <path d="M6 5.500h8M6 8.500h10M6 11.500h7M6 14.500h8" stroke="#000" />
                        </svg>
                    </Btn>
                    <button type="button" aria-label="Statistics" className="flex w-[30px] items-center justify-center border-[3px] border-[#e01818] bg-[#9cdbdb]">
                        <svg width="22" height="22" viewBox="0 0 22 22" stroke="#000" strokeWidth=".7">
                            <rect x=".5" y=".5" width="21" height="21" fill="none" />
                            <path d="M3 11h3v7H3z" fill="#f01010" />
                            <path d="M6 6h4v12H6z" fill="#30b830" />
                            <path d="M10 9h2v9h-2z" fill="#2040e0" />
                            <path d="M12 2h4v16h-4z" fill="#b030c0" />
                            <path d="M16 10h3v8h-3z" fill="#20e0f0" />
                            <path d="M1 19h20" strokeWidth="1" />
                        </svg>
                    </button>
                </div>
            </div>
        </Glass>
    );
}

export default function App() {
    return (
        <div className={`relative h-screen w-full overflow-hidden bg-black font-bold text-black ${mono}`}>
            <MainWindow />
            <ChecklistWindow />
            <MeasurementsWindow />
            <DrillManager />
            <ResultsViewer />
            <div className="absolute top-[985px] left-[1902px] flex size-[46px] items-center rounded-full border-2 border-[#d8e8d8] bg-linear-to-b from-[#8fd88f] to-[#2fb84a] pl-0.5 font-['Open_Sans',sans-serif] text-[13px] text-white">
                64
            </div>
        </div>
    );
}
